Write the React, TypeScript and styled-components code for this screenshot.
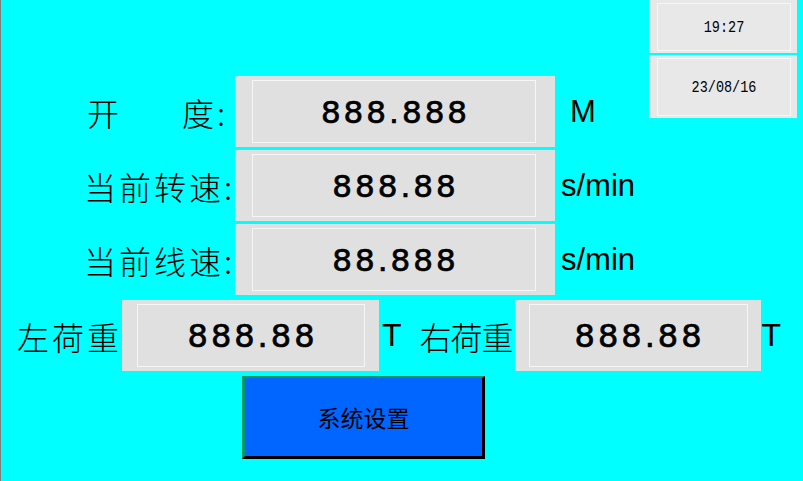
import * as React from 'react';
import styled, { createGlobalStyle } from 'styled-components';

const GlobalStyle = createGlobalStyle`
  html, body {
    margin: 0;
    padding: 0;
    background: #00ffff;
  }
`;

const cjk = `"Noto Sans CJK SC", "Noto Sans", sans-serif`;

const Page = styled.div`
  width: 803px;
  height: 481px;
  box-sizing: border-box;
  border-left: 1px solid #7f7f7f;
  background: #00ffff;
  display: flex;
  flex-direction: column;
  overflow: hidden;
`;

const Top = styled.div`
  display: flex;
  align-items: flex-start;
`;

const Readings = styled.div`
  display: flex;
  flex-direction: column;
  gap: 3px;
  padding-top: 76px;
`;

const ClockColumn = styled.div`
  display: flex;
  flex-direction: column;
  gap: 2px;
  width: 148px;
  margin-left: auto;
  margin-right: 6px;
`;

const ClockBox = styled.div<{ $h: number }>`
  height: ${(p) => p.$h}px;
  box-sizing: border-box;
  padding: 3px 6px 2px 8px;
  background: #e8e8e8;
  display: flex;
`;

const Frame = styled.div`
  flex: 1;
  border: 1px solid #f6f6f6;
  display: flex;
  align-items: center;
  justify-content: center;
`;

const ClockText = styled.span`
  font-family: "Liberation Mono", monospace;
  font-size: 13.5px;
  color: #000;
  display: inline-block;
  transform: scaleY(1.25);
`;

const Row = styled.div`
  display: flex;
  align-items: center;
  height: 71px;
`;

const Label = styled.div<{ $w?: number; $spacing?: number; $pad?: number; $ml?: number }>`
  ${(p) => (p.$w ? `width: ${p.$w}px;` : '')}
  box-sizing: border-box;
  display: flex;
  justify-content: flex-end;
  margin-left: ${(p) => p.$ml ?? 0}px;
  padding-right: ${(p) => p.$pad ?? 0}px;
  font-family: ${cjk};
  font-weight: 300;
  font-size: 32px;
  letter-spacing: ${(p) => p.$spacing ?? 3}px;
  color: #000;
  white-space: nowrap;
`;

const Wide = styled.span`
  margin-right: 60px;
`;

const ValueBox = styled.div<{ $w: number; $l: number; $r: number; $ml?: number }>`
  width: ${(p) => p.$w}px;
  height: 71px;
  box-sizing: border-box;
  margin-left: ${(p) => p.$ml ?? 0}px;
  padding: 4px ${(p) => p.$r}px 4px ${(p) => p.$l}px;
  background: #e0e0e0;
  display: flex;
  flex-shrink: 0;
`;

const Digits = styled.span<{ $size: number }>`
  font-family: "DejaVu Sans", sans-serif;
  font-weight: normal;
  font-size: ${(p) => p.$size}px;
  letter-spacing: 3px;
  margin-right: -3px;
  color: #000;
  -webkit-text-stroke: 0.7px #000;
`;

const Unit = styled.span<{ $gap: number; $size?: number }>`
  font-family: "Liberation Sans", Arial, sans-serif;
  font-size: ${(p) => p.$size ?? 31}px;
  color: #000;
  margin-left: ${(p) => p.$gap}px;
`;

const WeightsRow = styled(Row)`
  margin-top: 5px;
  padding-left: 16px;
`;

const SettingsButton = styled.button`
  width: 243px;
  height: 83px;
  margin: 5px 0 0 241px;
  padding: 0;
  box-sizing: border-box;
  background: #0066ff;
  border-style: solid;
  border-width: 2px 3px 3px 3px;
  border-color: #009966 #000 #000 #009966;
  font-family: ${cjk};
  font-size: 23px;
  color: #000;
  cursor: pointer;
`;

interface Reading {
  label: React.ReactNode;
  value: string;
  unit: string;
  unitGap: number;
  pad?: number;
}

const readings: Reading[] = [
  {
    label: (
      <>
        <Wide>开</Wide>度:
      </>
    ),
    value: '888.888',
    unit: 'M',
    unitGap: 15,
    pad: 7,
  },
  { label: '当前转速:', value: '888.88', unit: 's/min', unitGap: 6 },
  { label: '当前线速:', value: '88.888', unit: 's/min', unitGap: 6 },
];

export default function App() {
  return (
    <Page>
      <GlobalStyle />
      <Top>
        <Readings>
          {readings.map((r) => (
            <Row key={r.value}>
              <Label $w={234} $pad={r.pad}>
                {r.label}
              </Label>
              <ValueBox $w={320} $l={17} $r={19}>
                <Frame>
                  <Digits $size={31}>{r.value}</Digits>
                </Frame>
              </ValueBox>
              <Unit $gap={r.unitGap}>{r.unit}</Unit>
            </Row>
          ))}
        </Readings>
        <ClockColumn>
          <ClockBox $h={53}>
            <Frame>
              <ClockText>19:27</ClockText>
            </Frame>
          </ClockBox>
          <ClockBox $h={63}>
            <Frame>
              <ClockText>23/08/16</ClockText>
            </Frame>
          </ClockBox>
        </ClockColumn>
      </Top>
      <WeightsRow>
        <Label>左荷重</Label>
        <ValueBox $w={257} $l={15} $r={14}>
          <Frame>
            <Digits $size={32}>888.88</Digits>
          </Frame>
        </ValueBox>
        <Unit $gap={3} $size={32}>T</Unit>
        <Label $spacing={-1} $ml={18}>右荷重</Label>
        <ValueBox $w={246} $l={14} $r={13} $ml={2}>
          <Frame>
            <Digits $size={32}>888.88</Digits>
          </Frame>
        </ValueBox>
        <Unit $gap={1} $size={32}>T</Unit>
      </WeightsRow>
      <SettingsButton type="button">系统设置</SettingsButton>
    </Page>
  );
}
